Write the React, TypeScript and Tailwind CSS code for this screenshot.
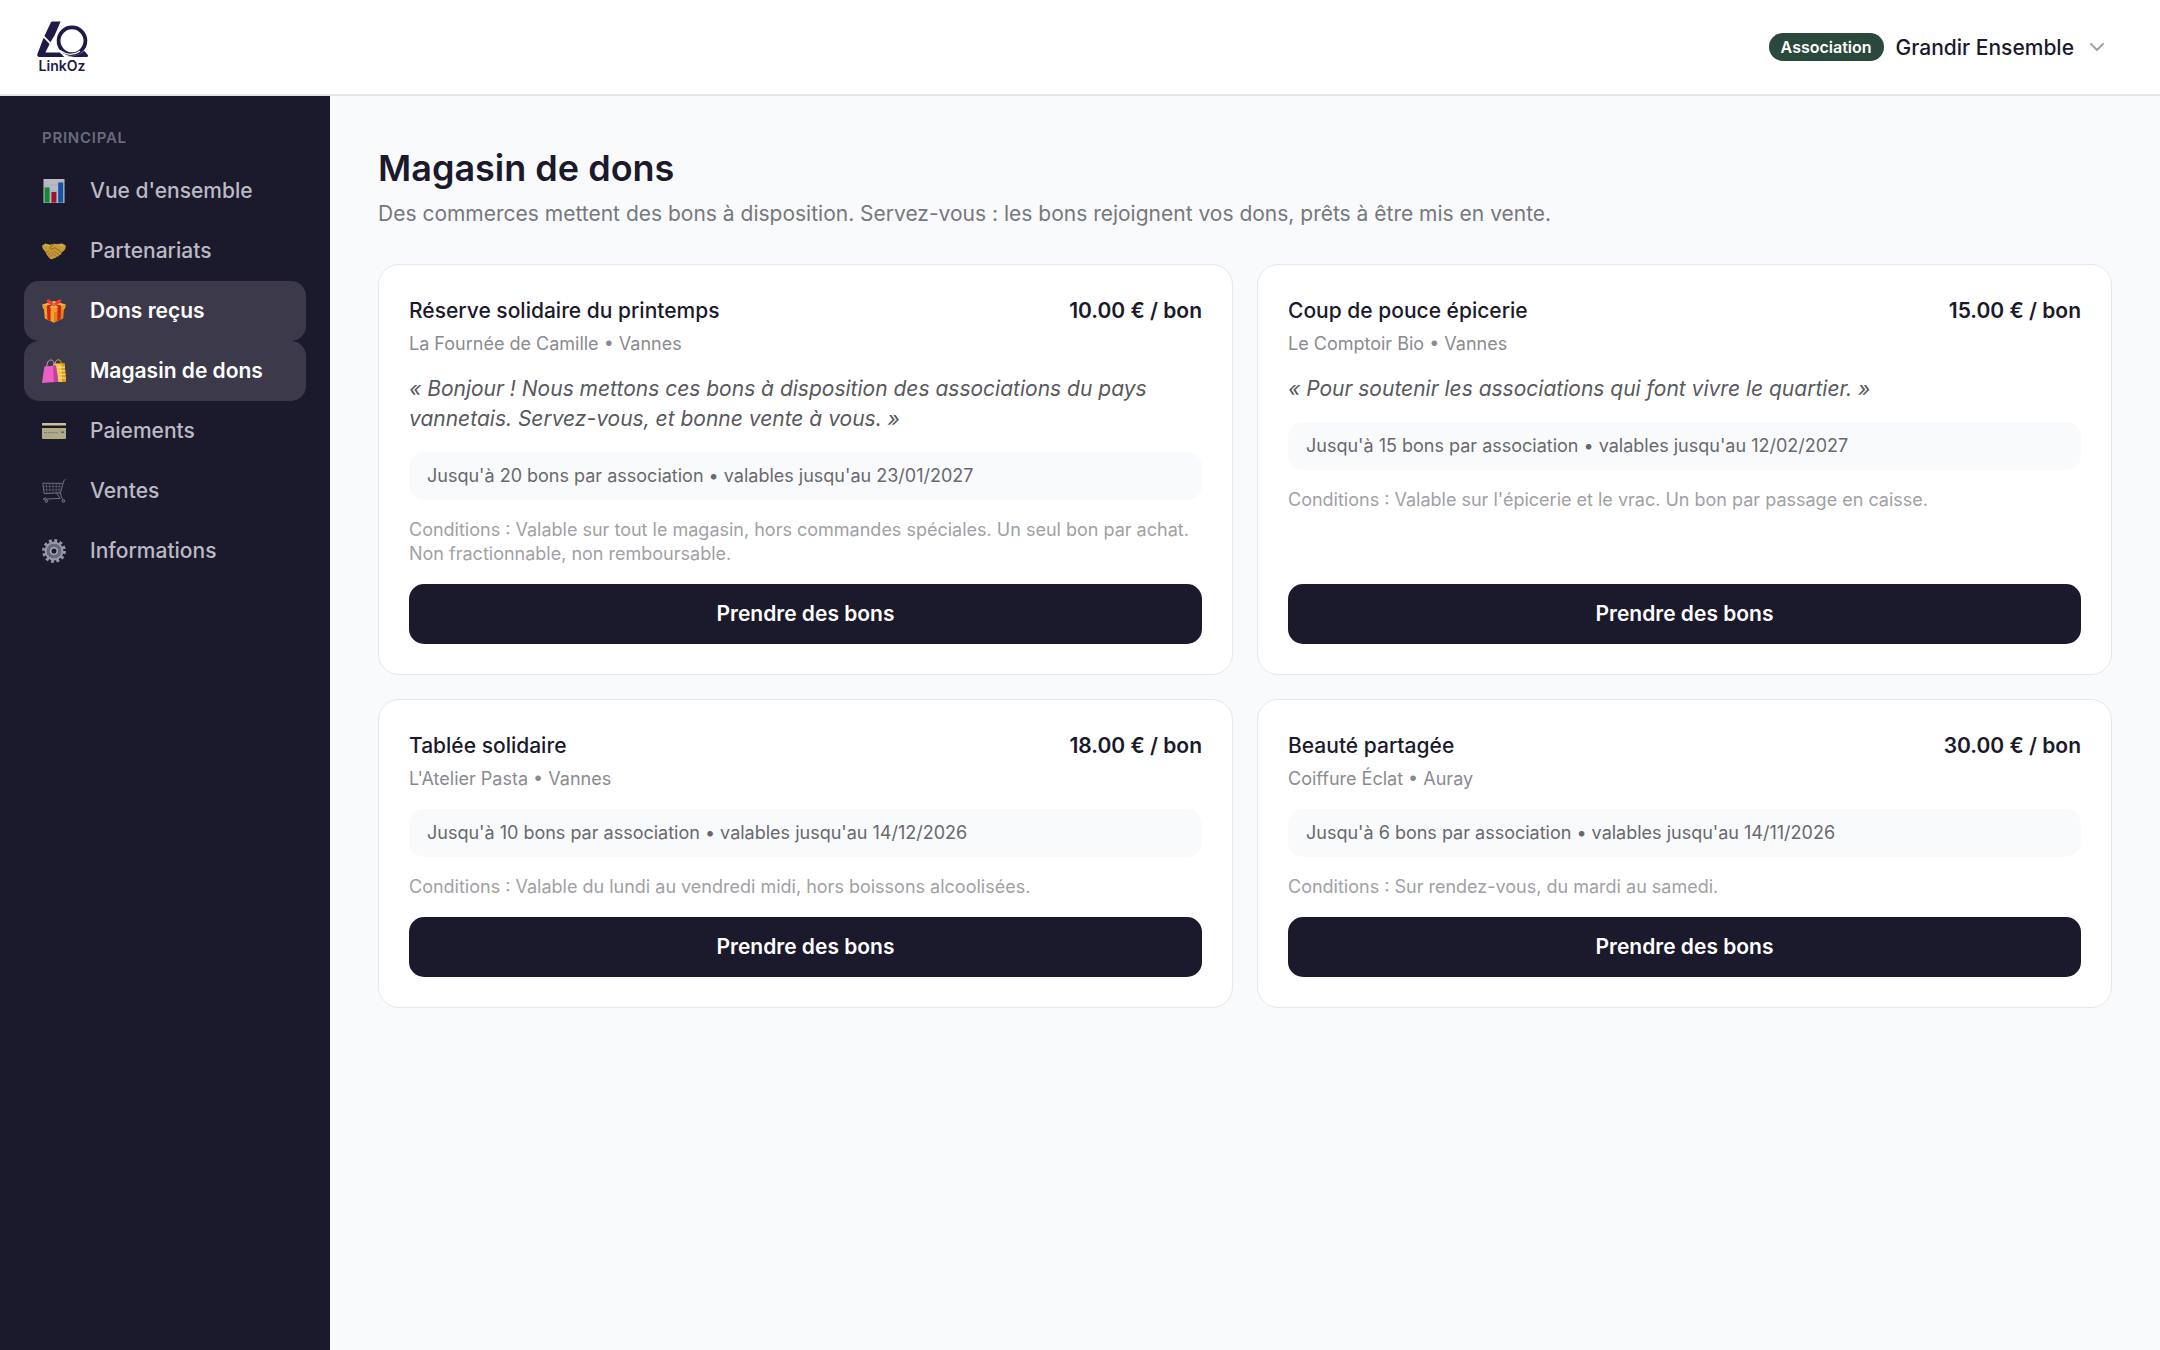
import { FC, ReactNode } from 'react';

interface NavItem {
    label: string;
    icon: ReactNode;
    active?: boolean;
}

interface Offer {
    title: string;
    price: string;
    shop: string;
    quote?: string;
    limit: string;
    conditions: string;
}

const ChartIcon = () => (
    <svg viewBox="0 0 24 24" className="size-6">
        <rect x="1.5" y="0" width="21" height="24" fill="#dfe3ec" />
        <path d="M1.5 6h21M1.5 12h21M1.5 18h21" stroke="#c3cad8" strokeWidth="0.6" />
        <rect x="2.6" y="8.4" width="5" height="15.2" fill="#12a537" />
        <rect x="9.4" y="13" width="5" height="10.6" fill="#c1122f" />
        <rect x="16.2" y="3.4" width="5" height="20.2" fill="#1263c4" />
    </svg>
);

const HandshakeIcon = () => (
    <svg viewBox="0 0 24 24" className="size-6">
        <path d="M.2 6.6 3.4 4.4l4.600 1.400 3.400-1 3.600.1 5.400-.5 3.400 2.200c.2 2.400-.8 4.400-2.400 5.600l-1.800 1.200c.3 1.800-1 2.600-2.200 2.400-.2 1.400-1.400 2-2.600 1.800-.6 1.300-1.800 1.800-3 1.600-1.200 1.400-3 1.200-4.200.2L4.600 15.400 3.200 12.600C1.200 11 0 9 .2 6.600z" fill="#f0bb3a" />
        <path d="m11.6 5-3.400 3.600c-.5 1.200 1 2 2.300 1.200l2.300-1.200 6.600 4.800" fill="none" stroke="#a86c12" strokeWidth="0.9" strokeLinecap="round" strokeLinejoin="round" />
        <path d="m12 12 4.800 3.600M9.800 13.600l4.200 3.600M4.400 14l2-2.200M6.200 15.800l2-2.200M8.200 17.600l1.600-1.800" fill="none" stroke="#b87a18" strokeWidth="0.8" strokeLinecap="round" />
        <path d="M2 6.800 4.200 5.800l3.400.9M18 6l3.400 1" fill="none" stroke="#ffe07a" strokeWidth="1" strokeLinecap="round" />
    </svg>
);

const GiftIcon = () => (
    <svg viewBox="0 0 24 24" className="size-6">
        <path d="M1.8 8.5 12 12v11.8L2.8 19.4z" fill="#f2a22c" />
        <path d="M22.2 8.5 12 12v11.8l9.2-4.4z" fill="#dd8418" />
        <path d="M.4 5.6 12 2l11.6 3.6-.6 3.8L12 13 1 9.4z" fill="#f9b83c" />
        <path d="M.4 5.6 12 9.4l11.6-3.800-.6 3.800L12 13 1 9.4z" fill="#ee9a22" />
        <path d="m4.8 7.2 3.800 1.200v13.7L5.400 20.600zM19.200 7.200l-3.800 1.200v13.700l3.200-1.500z" fill="#d3231f" />
        <path d="M11.8 5.4C9.6 1 6.400-.4 5.200.8c-1.300 1.400.2 4.200 6.600 5.800zM12.200 5.400C14.400 1 17.600-.4 18.800.8c1.300 1.400-.2 4.200-6.600 5.800z" fill="#ee3b34" />
        <path d="m11.2 5.6-6.600 1 1.600 2.200zM12.800 5.600l6.600 1-1.600 2.200z" fill="#c01c1c" />
        <circle cx="12" cy="5.6" r="1.8" fill="#f4564c" />
    </svg>
);

const BagsIcon = () => (
    <svg viewBox="0 0 24 24" className="size-6">
        <path d="M12.6 6.8C13 2.4 14.4.8 16.2.8c2.200 0 3.200 2 3.200 5" fill="none" stroke="#e3b23a" strokeWidth="1" />
        <path d="M11.2 4.600h11.400L24 23H12z" fill="#f5c93d" />
        <path d="M19.4 4.600h3.200L24 23h-4z" fill="#d99c22" />
        <path d="M13 8.200h10M13 11.800h10.200M13 15.400h10.400M13 19h10.600" stroke="#fbe48c" strokeWidth="1" />
        <path d="M4.600 9C4.800 3.400 6.600 1 8.800 1s3.800 2.400 4 7" fill="none" stroke="#c8a1c8" strokeWidth="1" />
        <path d="M2.400 7.600 14 6.400l2.400 16.400L0 24z" fill="#ee5fc6" />
        <path d="M11 6.800 14 6.400l2.400 16.400-4.600.4z" fill="#c63da4" />
    </svg>
);

const CardIcon = () => (
    <svg viewBox="0 0 24 24" className="size-6">
        <rect x="0" y="4" width="24" height="16" rx="1" fill="#d7cf9b" />
        <rect x="0" y="4" width="24" height="2.2" rx="1" fill="#efebc8" />
        <rect x="0" y="6.6" width="24" height="2.4" fill="#1b1a1c" />
        <path d="M2 13.6h13.600" stroke="#929da6" strokeWidth="1.400" strokeDasharray="3 .7" />
        <path d="M19 13.200h3" stroke="#5c76a8" strokeWidth="1.600" />
        <path d="M2 17h9" stroke="#c8c08c" strokeWidth="0.800" />
    </svg>
);

const CartIcon = () => (
    <svg viewBox="0 0 24 24" className="size-6" fill="none" stroke="#85879a">
        <path d="M23.6.4 21.800 1.600 18.400 13.800 2.200 14.600.8 4.200l19.800.2" strokeWidth="1" />
        <path d="M1.2 7.400h18.400M1.600 10.800h17.200M4.200 4.400l.8 10M7.600 4.400l.4 10M11 4.400v9.800M14.400 4.400l-.4 9.600M17.600 4.400l-.8 9.400" strokeWidth="0.7" strokeOpacity="0.75" />
        <path d="m14.6 14.200 3.600 5.200-17 .8 3-1.800M18.400 13.800l1 4.400 2.200 3" strokeWidth="1" />
        <circle cx="4.4" cy="22" r="1.400" fill="#3b3b46" />
        <circle cx="21.4" cy="22" r="1.400" fill="#3b3b46" />
    </svg>
);

const GearIcon = () => (
    <svg viewBox="0 0 24 24" className="size-6" fill="none">
        <circle cx="12" cy="12" r="10.4" stroke="#b4b8c4" strokeWidth="3" strokeDasharray="2.9 2.545" />
        <circle cx="12" cy="12" r="8.2" stroke="#b4b8c4" strokeWidth="2.4" />
        <circle cx="12" cy="12" r="5.6" stroke="#7b7f8f" strokeWidth="3.4" />
        <circle cx="12" cy="12" r="3.3" stroke="#d2d6e0" strokeWidth="1.5" />
    </svg>
);

const Logo = () => (
    <svg viewBox="0 0 54 58" className="h-[58px] w-[54px]" role="img" aria-label="LinkOz">
        <g fill="#1f1b46">
            <path d="M17 3.400h7.600L18.800 17l-4.400 7.200-6-6.200 6.400-13.600c.4-.8 1.200-1 2.200-1z" />
            <path d="m7.600 19.800 6 6.200-4.200 8.600h14.400l4.600 4.400H3.400C1.400 39 .8 37.400 1.600 35.400z" />
            <path d="M30.600 39c7.200-.4 13-2 17.600-6.200l3.600 4.200c.8 1.200.2 2-1.200 2z" />
        </g>
        <circle cx="36" cy="22.8" r="13.4" fill="none" stroke="#1f1b46" strokeWidth="3.800" />
        <path d="M24 32.600c6 4.600 13.800 5 20 .6" fill="none" stroke="#fff" strokeWidth="1.200" />
        <text x="26" y="53" textAnchor="middle" className="fill-[#1f1b46] font-['Inter'] text-[14px] font-semibold">LinkOz</text>
    </svg>
);

const navItems: NavItem[] = [
    { label: "Vue d'ensemble", icon: <ChartIcon /> },
    { label: 'Partenariats', icon: <HandshakeIcon /> },
    { label: 'Dons reçus', icon: <GiftIcon />, active: true },
    { label: 'Magasin de dons', icon: <BagsIcon />, active: true },
    { label: 'Paiements', icon: <CardIcon /> },
    { label: 'Ventes', icon: <CartIcon /> },
    { label: 'Informations', icon: <GearIcon /> },
];

const offers: Offer[] = [
    {
        title: 'Réserve solidaire du printemps',
        price: '10.00 € / bon',
        shop: 'La Fournée de Camille • Vannes',
        quote: '« Bonjour ! Nous mettons ces bons à disposition des associations du pays vannetais. Servez-vous, et bonne vente à vous. »',
        limit: "Jusqu'à 20 bons par association • valables jusqu'au 23/01/2027",
        conditions: 'Conditions : Valable sur tout le magasin, hors commandes spéciales. Un seul bon par achat. Non fractionnable, non remboursable.',
    },
    {
        title: 'Coup de pouce épicerie',
        price: '15.00 € / bon',
        shop: 'Le Comptoir Bio • Vannes',
        quote: '« Pour soutenir les associations qui font vivre le quartier. »',
        limit: "Jusqu'à 15 bons par association • valables jusqu'au 12/02/2027",
        conditions: "Conditions : Valable sur l'épicerie et le vrac. Un bon par passage en caisse.",
    },
    {
        title: 'Tablée solidaire',
        price: '18.00 € / bon',
        shop: "L'Atelier Pasta • Vannes",
        limit: "Jusqu'à 10 bons par association • valables jusqu'au 14/12/2026",
        conditions: 'Conditions : Valable du lundi au vendredi midi, hors boissons alcoolisées.',
    },
    {
        title: 'Beauté partagée',
        price: '30.00 € / bon',
        shop: 'Coiffure Éclat • Auray',
        limit: "Jusqu'à 6 bons par association • valables jusqu'au 14/11/2026",
        conditions: 'Conditions : Sur rendez-vous, du mardi au samedi.',
    },
];

const Header = () => (
    <header className="flex h-24 items-center justify-between border-b-2 border-[#e5e7eb] bg-white pl-9 pr-12">
        <a href="#">
            <Logo />
        </a>
        <button type="button" className="flex items-center gap-3 pr-2">
            <span className="rounded-full bg-[#2a493c] px-3 text-[16px] leading-7 font-semibold text-white">Association</span>
            <span className="pt-0.5 text-[21px] leading-[30px] font-medium">Grandir Ensemble</span>
            <svg viewBox="0 0 14 8" className="ml-1 h-2 w-3.5" fill="none" stroke="#9ca3af" strokeWidth="2" strokeLinecap="round" strokeLinejoin="round">
                <path d="m1 1 6 6 6-6" />
            </svg>
        </button>
    </header>
);

const Sidebar = () => (
    <aside className="w-[330px] shrink-0 bg-[#1b192c] px-6 pt-[30px]">
        <p className="mb-[11px] px-[18px] text-[15px] leading-6 font-semibold tracking-wider text-[#6b6a7c]">PRINCIPAL</p>
        <nav>
            {navItems.map((item) => (
                <a
                    key={item.label}
                    href="#"
                    className={`flex h-[60px] items-center gap-6 rounded-[15px] px-[18px] text-[21px] ${
                        item.active ? 'bg-[#3c3a4a] font-semibold text-white' : 'font-medium text-[#bbbac4]'
                    }`}
                >
                    <span className={item.active ? '' : 'opacity-80'}>{item.icon}</span>
                    {item.label}
                </a>
            ))}
        </nav>
    </aside>
);

const OfferCard: FC<{ offer: Offer }> = ({ offer }) => (
    <article className="flex flex-col gap-[18px] rounded-[21px] border border-[#e5e7eb] bg-white px-[30px] pt-[31px] pb-[30px]">
        <div>
            <div className="flex items-center justify-between text-[21px] leading-[30px]">
                <h2 className="text-[21px] font-medium">{offer.title}</h2>
                <span className="font-semibold">{offer.price}</span>
            </div>
            <p className="mt-1.5 text-[18px] leading-6 text-[#8a8b90]">{offer.shop}</p>
        </div>
        {offer.quote && <p className="text-[21px] leading-[30px] text-[#58595e] italic">{offer.quote}</p>}
        <p className="rounded-[15px] bg-[#f9fafb] px-[18px] py-3 text-[18px] leading-6 text-[#68696f]">{offer.limit}</p>
        <p className="text-[18px] leading-6 text-[#a0a1a5]">{offer.conditions}</p>
        <button type="button" className="mt-auto h-[60px] rounded-[15px] bg-[#1b192c] text-[21px] font-semibold text-white">
            Prendre des bons
        </button>
    </article>
);

export default function App() {
    return (
        <div className="flex min-h-screen flex-col bg-[#f9fafc] font-['Inter',sans-serif] text-[#1b192c]">
            <Header />
            <div className="flex flex-1">
                <Sidebar />
                <main className="min-w-0 flex-1 p-12">
                    <h1 className="text-[36px] leading-[48px] font-semibold">Magasin de dons</h1>
                    <p className="mt-[7px] text-[21px] leading-[30px] text-[#77787d]">
                        Des commerces mettent des bons à disposition. Servez-vous : les bons rejoignent vos dons, prêts à être mis en vente.
                    </p>
                    <div className="mt-[35px] grid grid-cols-2 gap-6">
                        {offers.map((offer) => (
                            <OfferCard key={offer.title} offer={offer} />
                        ))}
                    </div>
                </main>
            </div>
        </div>
    );
}
